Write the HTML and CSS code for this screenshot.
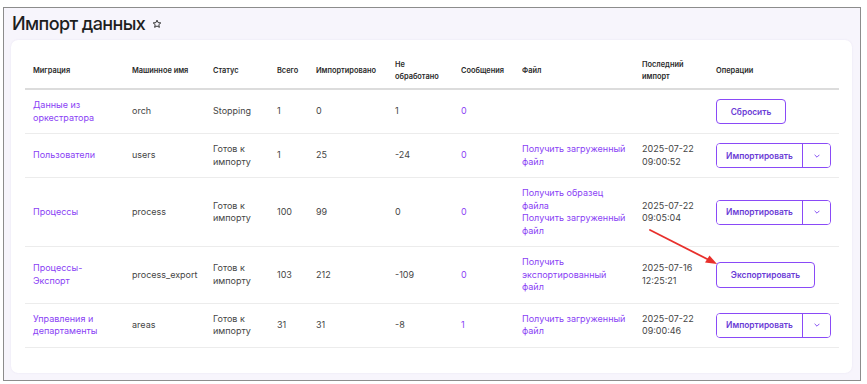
FILE: index.html
```html
<!DOCTYPE html>
<html lang="ru">
<head>
<meta charset="utf-8">
<title>Импорт данных</title>
<link rel="stylesheet" href="styles.css">
</head>
<body>
<div class="frame">
  <h1 class="title">Импорт данных
    <svg class="star" viewBox="0 0 24 24" width="10" height="10"><path d="M12 2.8l2.7 5.9 6.4.7-4.8 4.3 1.4 6.3L12 16.8 6.3 20l1.4-6.3L2.9 9.4l6.4-.7z" fill="none" stroke="#222" stroke-width="2.2" stroke-linejoin="round"/></svg>
  </h1>
  <div class="card">
    <table class="grid">
      <colgroup>
        <col class="c1"><col class="c2"><col class="c3"><col class="c4"><col class="c5">
        <col class="c6"><col class="c7"><col class="c8"><col class="c9"><col class="c10">
      </colgroup>
      <thead>
        <tr>
          <th>Миграция</th><th>Машинное имя</th><th>Статус</th><th>Всего</th><th>Импортировано</th>
          <th>Не<br>обработано</th><th>Сообщения</th><th>Файл</th><th>Последний<br>импорт</th><th>Операции</th>
        </tr>
      </thead>
      <tbody>
        <tr>
          <td><a class="link">Данные из<br>оркестратора</a></td>
          <td>orch</td><td>Stopping</td><td>1</td><td>0</td><td>1</td>
          <td><a class="link">0</a></td><td></td><td></td>
          <td><button class="btn btn-reset">Сбросить</button></td>
        </tr>
        <tr>
          <td><a class="link">Пользователи</a></td>
          <td>users</td><td>Готов к<br>импорту</td><td>1</td><td>25</td><td>-24</td>
          <td><a class="link">0</a></td>
          <td><a class="link">Получить загруженный<br>файл</a></td>
          <td>2025-07-22<br>09:00:52</td>
          <td><div class="split"><button class="split-main">Импортировать</button><button class="split-caret"><svg viewBox="0 0 10 6" width="6" height="4"><path d="M1 1l4 4 4-4" fill="none" stroke="#7b3ff2" stroke-width="1.5"/></svg></button></div></td>
        </tr>
        <tr>
          <td><a class="link">Процессы</a></td>
          <td>process</td><td>Готов к<br>импорту</td><td>100</td><td>99</td><td>0</td>
          <td><a class="link">0</a></td>
          <td><a class="link">Получить образец<br>файла</a><br><a class="link">Получить загруженный<br>файл</a></td>
          <td>2025-07-22<br>09:05:04</td>
          <td><div class="split"><button class="split-main">Импортировать</button><button class="split-caret"><svg viewBox="0 0 10 6" width="6" height="4"><path d="M1 1l4 4 4-4" fill="none" stroke="#7b3ff2" stroke-width="1.5"/></svg></button></div></td>
        </tr>
        <tr>
          <td><a class="link">Процессы-<br>Экспорт</a></td>
          <td>process_export</td><td>Готов к<br>импорту</td><td>103</td><td>212</td><td>-109</td>
          <td><a class="link">0</a></td>
          <td><a class="link">Получить<br>экспортированный<br>файл</a></td>
          <td>2025-07-16<br>12:25:21</td>
          <td><button class="btn btn-export">Экспортировать</button></td>
        </tr>
        <tr>
          <td><a class="link">Управления и<br>департаменты</a></td>
          <td>areas</td><td>Готов к<br>импорту</td><td>31</td><td>31</td><td>-8</td>
          <td><a class="link">1</a></td>
          <td><a class="link">Получить загруженный<br>файл</a></td>
          <td>2025-07-22<br>09:00:46</td>
          <td><div class="split"><button class="split-main">Импортировать</button><button class="split-caret"><svg viewBox="0 0 10 6" width="6" height="4"><path d="M1 1l4 4 4-4" fill="none" stroke="#7b3ff2" stroke-width="1.5"/></svg></button></div></td>
        </tr>
      </tbody>
    </table>
  </div>
  <svg class="arrow" width="80" height="50" viewBox="0 0 80 50">
    <line x1="3" y1="3" x2="64" y2="34" stroke="#e8302c" stroke-width="1.8" stroke-linecap="round"/>
    <path d="M70 37 L58 35.5 L62.5 28.5 Z" fill="#e8302c"/>
  </svg>
</div>
</body>
</html>
```
FILE: styles.css
```css
* { box-sizing: border-box; }
html, body { margin: 0; padding: 0; background: #ffffff; }
body {
  padding: 7px 6px 3px 3px;
  font-family: Inter, "Noto Sans", sans-serif;
  color: #454545;
}
.frame {
  position: relative;
  width: 858px;
  height: 374px;
  border: 1px solid #8c8c8c;
  background: #f7f5fc;
  padding: 3px 8px 7px 7px;
  overflow: hidden;
}
.title {
  margin: 0;
  font-size: 18px;
  line-height: 25px;
  font-weight: 500;
  color: #1e1e1e;
  letter-spacing: -0.6px;
  display: flex;
  align-items: center;
  gap: 7px;
  padding-left: 1px;
}
.star { margin-top: 1px; }
.card {
  margin-top: 4px;
  background: #ffffff;
  border-radius: 7px;
  box-shadow: 0 0 2px rgba(120, 100, 170, 0.12);
  padding: 14px 13px 26px 14px;
  height: 333px;
}
.grid {
  width: 814px;
  table-layout: fixed;
  border-collapse: collapse;
  font-size: 9px;
  line-height: 12.5px;
}
.c1 { width: 99px; } .c2 { width: 81px; } .c3 { width: 64px; } .c4 { width: 39px; }
.c5 { width: 79px; } .c6 { width: 66px; } .c7 { width: 61px; } .c8 { width: 120px; }
.c9 { width: 74px; } .c10 { width: 131px; }
.grid th {
  text-align: left;
  font-size: 7.4px;
  font-weight: 600;
  color: #2b2b2b;
  padding: 4.5px 8px;
  line-height: 12.5px;
  vertical-align: middle;
  border-bottom: 2px solid #dcdcdc;
}
.grid td {
  padding: 9px 8px;
  vertical-align: middle;
  border-bottom: 1px solid #ececec;
}
.link { color: #8a3ff5; text-decoration: none; }
.btn {
  font-family: inherit;
  font-size: 8.4px;
  font-weight: 600;
  color: #6a3bd6;
  background: #fff;
  border: 1.5px solid #8a4af7;
  border-radius: 4px;
  height: 25px;
  padding: 0;
  cursor: pointer;
}
.btn-reset { width: 70px; display: block; }
.btn-export { width: 99px; height: 26px; display: block; }
.split {
  display: flex;
  width: 115px;
  height: 25px;
  border: 1.5px solid #8a4af7;
  border-radius: 4px;
  overflow: hidden;
}
.split-main, .split-caret {
  font-family: inherit;
  background: #fff;
  border: 0;
  padding: 0;
  color: #6a3bd6;
  font-size: 8.4px;
  font-weight: 600;
}
.split-main { width: 86px; border-right: 1px solid #8a4af7; }
.split-caret { flex: 1; display: flex; align-items: center; justify-content: center; }
.arrow {
  position: absolute;
  left: 643px;
  top: 219px;
}
```
